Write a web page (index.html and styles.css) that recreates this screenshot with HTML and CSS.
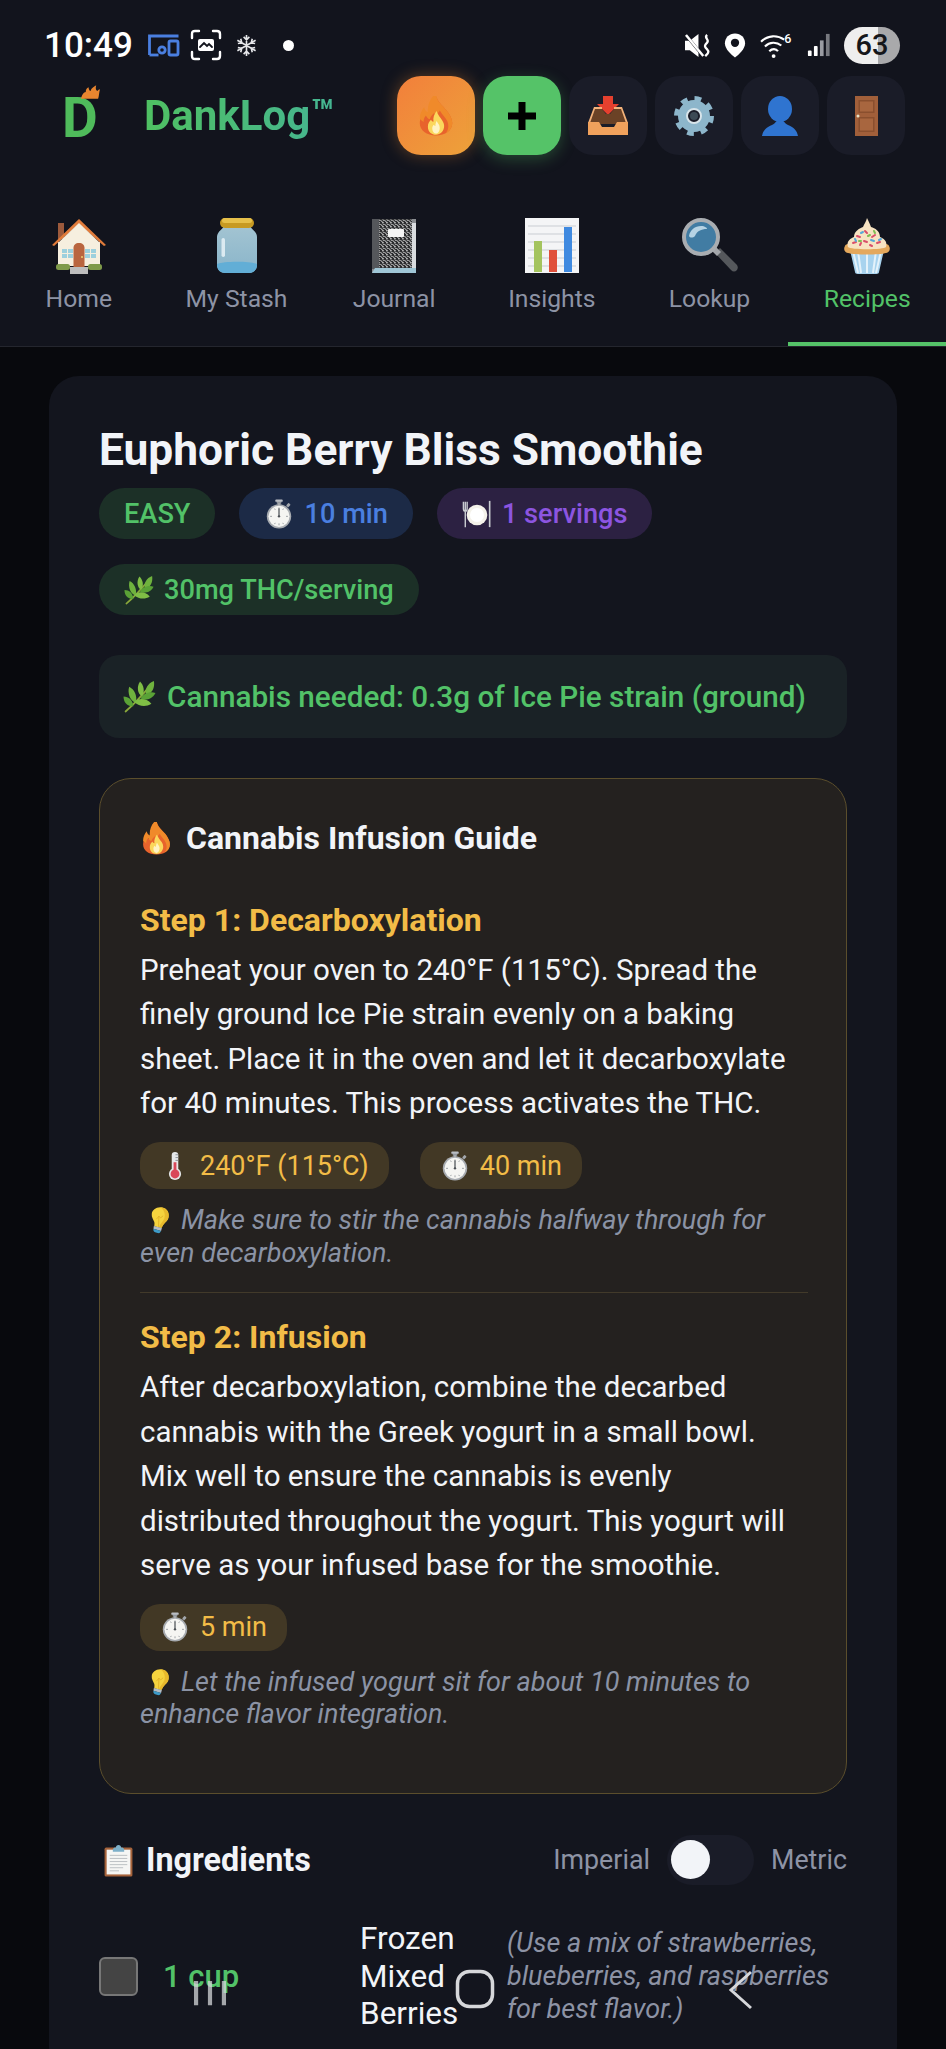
FILE: index.html
```html
<!DOCTYPE html>
<html lang="en">
<head>
<meta charset="utf-8">
<title>DankLog</title>
<link rel="stylesheet" href="styles.css">
</head>
<body>
<svg class="defs" width="0" height="0" aria-hidden="true">
  <defs>
    <symbol id="i-fire" viewBox="0 0 64 64">
      <path d="M33 2c3 10 12 15 19 25 3 5 6 10 6 16 0 12-11 20-26 20S6 55 6 43c0-7 3-13 7-18 1 4 3 7 6 8-1-12 4-24 14-31z" fill="#e8632c"/>
      <path d="M33 2c3 10 12 15 19 25 3 5 6 10 6 16 0 7-4 13-10 16 4-5 5-12 2-19-3-6-8-10-12-17-2 4-6 6-10 5-3 3-5 6-6 9-3-1-5-3-6-6-3 3-4 7-4 11-2-3-6-4-6-6 0-7 3-13 7-18 1 4 3 7 6 8-1-12 4-24 14-31z" fill="#f08a2a"/>
      <path d="M33 24c2 7 6 10 9 15 2 3 3 6 3 9 0 8-6 14-13 14s-13-5-13-13c0-5 2-8 5-11 1 2 2 3 4 3-1-6 1-12 5-17z" fill="#fbd75c"/>
      <path d="M33 40c2 4 5 6 5 11 0 5-3 9-6 9s-6-3-6-8c0-3 1-5 3-6 0 1 1 2 2 2 0-3 1-6 2-8z" fill="#fff3c4"/>
    </symbol>
    <symbol id="i-watch" viewBox="0 0 64 64">
      <rect x="27" y="2" width="10" height="8" rx="2" fill="#8d9299"/>
      <rect x="24" y="1" width="16" height="5" rx="2" fill="#b9bdc3"/>
      <rect x="29" y="8" width="6" height="6" fill="#a2a6ac"/>
      <rect x="49" y="9" width="6" height="8" rx="1.5" transform="rotate(42 52 13)" fill="#a2a6ac"/>
      <circle cx="32" cy="37" r="26" fill="#a7abb0"/>
      <circle cx="32" cy="37" r="22.5" fill="#f5f5f2"/>
      <path d="M32 18v4M32 52v4M13 37h4M47 37h4M22.5 20.5l1.5 2.6M41.5 20.5l-1.5 2.6M22.5 53.5l1.5-2.6M41.5 53.5l-1.5-2.6" stroke="#80858c" stroke-width="1.6"/>
      <path d="M32 37V21" stroke="#4b4f55" stroke-width="2.6" stroke-linecap="round"/>
      <circle cx="32" cy="37" r="2.5" fill="#4b4f55"/>
    </symbol>
    <symbol id="i-herb" viewBox="0 0 64 64">
      <path d="M5 61C18 50 32 36 52 12" stroke="#8aa83a" stroke-width="3.500" fill="none" stroke-linecap="round"/>
      <path d="M60 2c2 13-3 24-15 27-4-10 3-23 15-27z" fill="#6fb23e"/>
      <path d="M33 3c7 7 10 18 4 29-9-5-11-19-4-29z" fill="#7fbe45"/>
      <path d="M63 25c-6 12-19 15-29 11 4-10 18-15 29-11z" fill="#5aa236"/>
      <path d="M12 13c10 5 16 17 13 31-11-3-17-18-13-31z" fill="#6fb23e"/>
      <path d="M55 46c-11 7-24 5-33-3 6-8 23-9 33 3z" fill="#7fbe45"/>
      <path d="M1 32c10 0 18 7 19 19-11 1-19-7-19-19z" fill="#5aa236"/>
    </symbol>
    <symbol id="i-bulb" viewBox="0 0 64 64">
      <path d="M36 2c13 0 22 10 20 22-1 9-8 12-13 20-2 3-3 5-4 7l-17-4c0-3 1-6 0-10-2-6-7-11-6-19C17 9 25 2 36 2z" fill="#f5d33e"/>
      <path d="M36 2c13 0 22 10 20 22-1 9-8 12-13 20-2 3-3 5-4 7l-6-2c3-8 10-13 13-21 3-10-1-21-10-26z" fill="#e8b92c"/>
      <path d="M27 30l6-7 4 4 6-5M33 23l-1 25" stroke="#d9a520" stroke-width="1.6" fill="none"/>
      <path d="M21 46l19 5-2 7-18-5z" fill="#b4bcc4"/>
      <path d="M20 53l18 5-2 3c-1 2-3 3-6 2l-6-2c-3-1-5-3-4-8z" fill="#3d9bc9"/>
    </symbol>
  </defs>
</svg>

<div class="app">
  <div class="status">
    <span class="time">10:49</span>
    <svg class="st st-cast" viewBox="0 0 32 24" fill="none" stroke="#4a7fe0" stroke-width="2.8"><path d="M1.500 22V3h29"/><path d="M1.500 22h9"/><circle cx="14" cy="17" r="3.200"/><rect x="21" y="8" width="9" height="14" rx="1.500"/></svg>
    <svg class="st st-shot" viewBox="0 0 32 32" fill="none" stroke="#fff" stroke-width="2.4" stroke-linecap="round"><path d="M2 9V5c0-2 1-3 3-3h4M23 2h4c2 0 3 1 3 3v4M30 23v4c0 2-1 3-3 3h-4M9 30H5c-2 0-3-1-3-3v-4"/><rect x="8" y="10" width="16" height="12" rx="2" fill="#fff" stroke="none"/><path d="M10 18l4-4 3 3 2-2 3 3" stroke="#12141d" stroke-width="1.800"/></svg>
    <svg class="st st-snow" viewBox="0 0 24 24" fill="none" stroke="#e6e7ea" stroke-width="1.700"><path d="M12 1v22M2.500 6.500l19 11M21.500 6.500l-19 11M9 3l3 3 3-3M9 21l3-3 3 3M3 10l4-1-1-4M21 14l-4 1 1 4M21 10l-4-1 1-4M3 14l4 1-1 4"/></svg>
    <span class="st-dot"></span>
    <span class="st-right">
      <svg class="st st-mute" viewBox="0 0 28 26"><path d="M1 8h5l9-7v24l-9-7H1z" fill="#fff"/><path d="M1 1l18 22" stroke="#12141d" stroke-width="3"/><path d="M2 2l18 22" stroke="#fff" stroke-width="2.600"/><path d="M24 2c-4 3 3 5 0 8s-3 4 0 7 0 5-2 7" fill="none" stroke="#fff" stroke-width="2.400"/></svg>
      <svg class="st st-pin" viewBox="0 0 24 28"><path d="M12 1C5.500 1 1 5.800 1 11.500 1 18 8 24 12 27c4-3 11-9 11-15.500C23 5.800 18.500 1 12 1z" fill="#fff"/><circle cx="12" cy="11" r="4.500" fill="#12141d"/></svg>
      <svg class="st st-wifi" viewBox="0 0 34 28" fill="none" stroke="#fff" stroke-width="2.200"><path d="M1 10c7-7 17-7 24-2M5 15c5-5 12-5 17-1M9.500 20c3-3 7-3 9 0"/><circle cx="14" cy="25" r="2" fill="#fff" stroke="none"/><text class="wifi-six" x="25" y="11">6</text></svg>
      <svg class="st st-signal" viewBox="0 0 26 26"><rect x="1" y="19" width="4" height="6" rx="1" fill="#fff"/><rect x="7.500" y="14" width="4" height="11" rx="1" fill="#fff"/><rect x="14" y="8" width="4" height="17" fill="#9a9ca2"/><rect x="20.500" y="1" width="4" height="24" fill="#77797f"/></svg>
      <span class="battery">63</span>
    </span>
  </div>

  <header class="topbar">
    <span class="logo">D<svg class="logo-flame" viewBox="0 0 20 14"><path d="M0 14C1 10 3 7 5 7c0-3 1-4 3-5 0 2 1 4 2 4 1-3 3-4 6-6-1 4 0 5 1 6 1-1 2-2 3-2-1 3-1 8-2 10z" fill="#e8852f"/></svg></span>
    <span class="brand">DankLog<sup class="tm">™</sup></span>
    <div class="actions">
      <button class="act act-fire"><svg class="ico-act"><use href="#i-fire"/></svg></button>
      <button class="act act-add"><svg class="ico-plus" viewBox="0 0 28 28"><path d="M10.500 0h7v10.500H28v7H17.500V28h-7V17.500H0v-7h10.500z" fill="#000"/></svg></button>
      <button class="act"><svg class="ico-act" viewBox="0 0 40 40"><path d="M15 0h10v8h6L20 19 9 8h6z" fill="#e5402e"/><path d="M6 12h7l5 6h4l5-6h7l5 16H1z" fill="#6b4226"/><path d="M6 11h8v2H7L2 27H0zM34 11h-8v2h7l5 14h2z" fill="#f3b27a"/><path d="M0 26h11l3 5h12l3-5h11v13H0z" fill="#f0a15c"/></svg></button>
      <button class="act"><svg class="ico-act" viewBox="0 0 40 40"><circle cx="20" cy="20" r="11.500" fill="none" stroke="#8db6cb" stroke-width="9"/><circle cx="20" cy="20" r="17" fill="none" stroke="#8db6cb" stroke-width="6" stroke-dasharray="6.500 6.850"/><circle cx="20" cy="20" r="4" fill="#3c4a55"/><circle cx="20" cy="20" r="7" fill="none" stroke="#d8e4ea" stroke-width="2"/></svg></button>
      <button class="act"><svg class="ico-act" viewBox="0 0 40 40"><ellipse cx="20" cy="13" rx="12" ry="13" fill="#2f74d0"/><path d="M20 24c-4 0-4 3-8 5-5 2-9 5-10 11h36c-1-6-5-9-10-11-4-2-4-5-8-5z" fill="#2f74d0"/></svg></button>
      <button class="act"><svg class="ico-act" viewBox="0 0 40 40"><rect x="9" y="0" width="23" height="40" fill="#a15f3a"/><rect x="12.500" y="4" width="16" height="13" fill="#8a4f2e"/><rect x="12.500" y="21" width="16" height="15" fill="#8a4f2e"/><rect x="14" y="5.500" width="13" height="10" fill="#a8663f"/><rect x="14" y="22.500" width="13" height="12" fill="#a8663f"/><circle cx="12" cy="20" r="1.500" fill="#e8e2c8"/></svg></button>
    </div>
  </header>

  <nav class="tabs">
    <a class="tab"><svg class="tab-ico" viewBox="0 0 56 56">
      <rect x="7" y="5" width="6" height="16" fill="#9c5a3c"/>
      <path d="M7 24h42v24H7z" fill="#f6efdf"/>
      <path d="M28 1L1 27l2 1L28 6l25 22 2-1z" fill="#e07b3a"/><path d="M28 5L8 24h40z" fill="#f6efdf"/>
      <rect x="11" y="31" width="11" height="9" fill="#9dd0dd"/><rect x="34" y="31" width="11" height="9" fill="#9dd0dd"/>
      <path d="M16.500 31v9M11 35.500h11M39.500 31v9M34 35.500h11" stroke="#f6efdf" stroke-width="1"/>
      <path d="M22.500 50V30c0-3 2-5 5.500-5s5.500 2 5.500 5v20z" fill="#b9653f"/><circle cx="31" cy="39" r="1" fill="#f0d070"/>
      <rect x="5" y="46" width="14" height="6" rx="2.500" fill="#7f9a4a"/><rect x="37" y="46" width="14" height="6" rx="2.500" fill="#7f9a4a"/>
      <rect x="19" y="49" width="18" height="7" fill="#bdbdbd"/></svg><span>Home</span></a>
    <a class="tab"><svg class="tab-ico" viewBox="0 0 56 56">
      <defs><linearGradient id="jarg" x1="0" y1="0" x2="0" y2="1"><stop offset="0" stop-color="#a3c4d2"/><stop offset="1" stop-color="#8ab5ca"/></linearGradient></defs>
      <path d="M15 7h26c0 4 7 6 7 12v28c0 5-4 8-8 8H16c-4 0-8-3-8-8V19c0-6 7-8 7-12z" fill="url(#jarg)"/>
      <path d="M8 46c6-3 34-3 40 0v1c0 5-4 8-8 8H16c-4 0-8-3-8-8z" fill="#62aed6"/>
      <rect x="12.500" y="20" width="3.500" height="19" rx="1.700" fill="#dbeaf1"/>
      <rect x="11" y="0" width="34" height="10" rx="5" fill="#c79a22"/><rect x="13" y="0" width="30" height="5" rx="2.500" fill="#e6c04a"/></svg><span>My Stash</span></a>
    <a class="tab"><svg class="tab-ico" viewBox="0 0 56 56">
      <defs><pattern id="speck" width="4" height="4" patternUnits="userSpaceOnUse"><rect width="4" height="4" fill="#2b2c2e"/><path d="M0 .8h1.800M2.400 2.400l1.500 1M.6 3.300l1-.9" stroke="#ededed" stroke-width="1"/></pattern></defs>
      <rect x="6" y="1" width="44" height="54" fill="#8a8d91"/>
      <rect x="6" y="1" width="7" height="50" fill="#55575b"/>
      <rect x="13" y="1" width="33" height="49" fill="url(#speck)"/>
      <rect x="46" y="5" width="4" height="45" fill="#d9dcdf"/>
      <rect x="22" y="11" width="16" height="8" rx="1" fill="#f4f4f4"/>
      <path d="M6 55l3-5h41v5z" fill="#9fc6d6"/></svg><span>Journal</span></a>
    <a class="tab"><svg class="tab-ico" viewBox="0 0 56 56">
      <rect x="1" y="0" width="54" height="55" fill="#f4f5f6"/>
      <path d="M4 8h48M4 16h48M4 24h48M4 32h48M4 40h48M4 48h48" stroke="#c9cdd2" stroke-width="1"/>
      <rect x="10" y="23" width="8" height="31" fill="#a4c45e"/><rect x="25" y="32" width="8" height="22" fill="#e0503b"/><rect x="40" y="9" width="8" height="45" fill="#3f8ae0"/></svg><span>Insights</span></a>
    <a class="tab"><svg class="tab-ico" viewBox="0 0 56 56">
      <path d="M33 35l5-5 17 17c1 2 1 3 0 5-2 2-4 2-6 0z" fill="#55585c"/>
      <path d="M30 33l4-4 5 5-4 4z" fill="#a4a7ab"/>
      <circle cx="19" cy="19" r="17" fill="#417ca3" stroke="#a9adb1" stroke-width="4"/>
      <path d="M7 18c1-6 6-10 12-10 4 0 6 2 6 3-6 0-10 2-12 7-2 2-5 2-6 0z" fill="#b6d3e4"/></svg><span>Lookup</span></a>
    <a class="tab tab-on"><svg class="tab-ico" viewBox="0 0 56 56">
      <path d="M11 32h34l-5 22c0 1-1 2-3 2H19c-2 0-3-1-3-2z" fill="#a8d3ee"/>
      <path d="M19 33l3 22M28 33v22M37 33l-3 22M14 33l5 22M42 33l-5 22" stroke="#e4f2fa" stroke-width="2"/>
      <path d="M6 28c0-5 44-5 44 0 2 3 0 7-3 7-6 2-32 2-38 0-3 0-5-4-3-7z" fill="#e4a85c"/>
      <path d="M9 29c-2-6 3-9 6-10 0-6 6-9 9-10 1-3 3-5 4-9 2 4 3 6 4 9 4 1 9 4 9 10 3 1 8 4 6 10-2 3-36 3-38 0z" fill="#f7e3c2"/>
      <path d="M18 18l3 1M26 13l2 2M36 17l-3 2M14 25l3-1M25 23l3 1M38 25l3-1M31 27l2 1M21 27l1-2" stroke="#d94f6a" stroke-width="2" stroke-linecap="round"/>
      <path d="M22 15l2-1M32 22l3 1M16 21l1 2M42 21l-2 1" stroke="#57a8d8" stroke-width="2" stroke-linecap="round"/>
      <path d="M29 18l2-1M20 23l2 0M35 13l1 2" stroke="#7fbf52" stroke-width="2" stroke-linecap="round"/></svg><span>Recipes</span></a>
  </nav>

  <main class="main">
    <article class="card">
      <h1 class="title">Euphoric Berry Bliss Smoothie</h1>
      <div class="pills">
        <span class="pill pill-green">EASY</span>
        <span class="pill pill-blue"><svg class="emo"><use href="#i-watch"/></svg>10 min</span>
        <span class="pill pill-purple"><svg class="emo" viewBox="0 0 64 64"><path d="M7 6v20M3 6v14c0 4 2 6 4 6s4-2 4-6V6M7 26v34" stroke="#c9ccd1" stroke-width="3" fill="none"/><circle cx="32" cy="34" r="22" fill="#f4f2ea"/><circle cx="32" cy="34" r="15" fill="#fff"/><path d="M59 4v56" stroke="#c9ccd1" stroke-width="3.500"/></svg>1 servings</span>
        <span class="pill pill-green"><svg class="emo"><use href="#i-herb"/></svg>30mg THC/serving</span>
      </div>
      <div class="needed"><svg class="emo emo-lg"><use href="#i-herb"/></svg>Cannabis needed: 0.3g of Ice Pie strain (ground)</div>

      <section class="guide">
        <h2 class="guide-title"><svg class="emo emo-lg"><use href="#i-fire"/></svg>Cannabis Infusion Guide</h2>
        <div class="step">
          <h3 class="step-title">Step 1: Decarboxylation</h3>
          <p class="step-text">Preheat your oven to 240°F (115°C). Spread the finely ground Ice Pie strain evenly on a baking sheet. Place it in the oven and let it decarboxylate for 40 minutes. This process activates the THC.</p>
          <div class="chips">
            <span class="chip"><svg class="emo" viewBox="0 0 64 64"><rect x="25" y="2" width="14" height="46" rx="7" fill="#e6e8ea"/><circle cx="32" cy="49" r="13" fill="#e6e8ea"/><circle cx="32" cy="49" r="9.500" fill="#d9485a"/><rect x="29" y="24" width="6" height="24" fill="#d9485a"/><path d="M33 8h6M33 14h6M33 20h6" stroke="#8a8f95" stroke-width="2"/></svg>240°F (115°C)</span>
            <span class="chip"><svg class="emo"><use href="#i-watch"/></svg>40 min</span>
          </div>
          <p class="tip"><svg class="emo-tip"><use href="#i-bulb"/></svg>Make sure to stir the cannabis halfway through for even decarboxylation.</p>
        </div>
        <div class="step step-last">
          <h3 class="step-title">Step 2: Infusion</h3>
          <p class="step-text">After decarboxylation, combine the decarbed cannabis with the Greek yogurt in a small bowl. Mix well to ensure the cannabis is evenly distributed throughout the yogurt. This yogurt will serve as your infused base for the smoothie.</p>
          <div class="chips">
            <span class="chip"><svg class="emo"><use href="#i-watch"/></svg>5 min</span>
          </div>
          <p class="tip"><svg class="emo-tip"><use href="#i-bulb"/></svg>Let the infused yogurt sit for about 10 minutes to enhance flavor integration.</p>
        </div>
      </section>

      <div class="ing-head">
        <h2 class="ing-title"><svg class="emo emo-lg" viewBox="0 0 64 64"><rect x="5" y="7" width="54" height="56" rx="3" fill="#a5623a"/><rect x="9" y="11" width="46" height="48" fill="#f5f6f4"/><path d="M15 22h34M15 28h34M15 34h34M15 40h34M15 46h26M15 52h18" stroke="#b9bdc0" stroke-width="1.800"/><path d="M21 12c0-4 3-5 6-5 0-3 2-5 5-5s5 2 5 5c3 0 6 1 6 5v3H21z" fill="#7db0c9"/></svg>Ingredients</h2>
        <div class="units">
          <span>Imperial</span>
          <span class="toggle"><span class="knob"></span></span>
          <span>Metric</span>
        </div>
      </div>
      <div class="ing-row">
        <span class="check"></span>
        <span class="qty">1 cup</span>
        <span class="ing-name">Frozen Mixed Berries</span>
        <span class="ing-note">(Use a mix of strawberries, blueberries, and raspberries for best flavor.)</span>
      </div>
    </article>
  </main>

  <div class="softkeys" aria-hidden="true">
    <svg class="sk sk-recent" viewBox="0 0 36 28"><path d="M3 0v26M18 0v26M33 0v26" stroke="#d6d7da" stroke-opacity=".75" stroke-width="4.500"/></svg>
    <svg class="sk sk-home" viewBox="0 0 40 40"><rect x="2.500" y="2.500" width="35" height="35" rx="12" fill="none" stroke="#d6d7da" stroke-width="3.500"/></svg>
    <svg class="sk sk-back" viewBox="0 0 26 40"><path d="M23 2L3 20l20 18" fill="none" stroke="#d6d7da" stroke-width="3"/></svg>
  </div>
</div>
</body>
</html>
```

FILE: styles.css
```css
* { box-sizing: border-box; }
html, body { margin: 0; padding: 0; }
body {
  width: 946px;
  height: 2049px;
  overflow: hidden;
  background: #08090d;
  font-family: Roboto, "Liberation Sans", sans-serif;
  color: #f2f4f8;
}
.defs { position: absolute; }
.app { position: relative; width: 946px; height: 2049px; overflow: hidden; }
svg { display: block; flex: none; }

/* status bar */
.status {
  height: 76px;
  padding: 14px 46px 0 44px;
  display: flex;
  align-items: center;
  background: #12141d;
}
.time { font-size: 35px; font-weight: 500; color: #fff; margin-right: 15px; }
.st-cast { width: 32px; height: 24px; margin-right: 10px; }
.st-shot { width: 32px; height: 32px; margin-right: 13px; }
.st-snow { width: 23px; height: 25px; margin-right: 25px; }
.st-dot { width: 11px; height: 11px; border-radius: 50%; background: #fff; }
.st-right { margin-left: auto; display: flex; align-items: center; }
.st-mute { width: 27px; height: 25px; margin-right: 13px; }
.st-pin { width: 22px; height: 27px; margin-right: 14px; }
.st-wifi { width: 33px; height: 27px; margin-right: 14px; }
.wifi-six { font: 500 13px Roboto, sans-serif; fill: #fff; stroke: none; }
.st-signal { width: 24px; height: 26px; margin-right: 13px; }
.battery {
  width: 56px;
  height: 37px;
  border-radius: 19px;
  background: linear-gradient(90deg, #eeeeee 0 61%, #a9a9ab 61%);
  color: #15161a;
  font-size: 29px;
  font-weight: 500;
  display: flex;
  align-items: center;
  justify-content: center;
}

/* header */
.topbar {
  height: 79px;
  padding: 0 41px 0 62px;
  display: flex;
  align-items: center;
  background: #12141d;
}
.logo {
  position: relative;
  width: 82px;
  font-size: 55px;
  font-weight: 700;
  color: #4fbb5b;
  line-height: 50px;
  margin-top: 4px;
}
.logo-flame { position: absolute; left: 19px; top: -8px; width: 19px; height: 14px; }
.brand {
  font-size: 42px;
  font-weight: 700;
  background: linear-gradient(90deg, #4fc062, #45b592);
  -webkit-background-clip: text;
  background-clip: text;
  color: transparent;
  line-height: 50px;
}
.tm { font-size: 38px; vertical-align: 4px; line-height: 0; font-weight: 700; }
.actions { margin-left: auto; display: flex; gap: 8px; }
.act {
  width: 78px;
  height: 79px;
  border: 0;
  padding: 0;
  border-radius: 24px;
  background: #1a1c28;
  display: flex;
  align-items: center;
  justify-content: center;
}
.act-fire { background: linear-gradient(135deg, #f27f3b, #eda23a); box-shadow: 0 0 16px rgba(240, 140, 50, .35); }
.act-add { background: #55c368; box-shadow: 0 4px 16px rgba(85, 195, 104, .3); }
.ico-act { width: 40px; height: 40px; }
.ico-plus { width: 28px; height: 28px; }

/* tabs */
.tabs {
  height: 192px;
  display: flex;
  background: #12141d;
  border-bottom: 1px solid #24262e;
}
.tab {
  flex: 1 1 0;
  display: flex;
  flex-direction: column;
  align-items: center;
  padding-top: 63px;
  font-size: 24.700px;
  color: #8d93a5;
  border-bottom: 4px solid transparent;
}
.tab-ico { width: 56px; height: 56px; margin-bottom: 10px; }
.tab-on { color: #52c268; border-bottom-color: #55c368; }

/* card */
.main { padding: 29px 49px 0; }
.card {
  background: #13151e;
  border-radius: 30px;
  padding: 50px 50px 0;
  height: 1700px;
}
.title { margin: 0 0 14px; font-size: 44.300px; font-weight: 700; line-height: 48px; color: #f2f4f8; }
.pills { display: flex; flex-wrap: wrap; gap: 25px 24px; }
.pill {
  height: 51px;
  padding: 0 25px;
  border-radius: 26px;
  font-size: 27.200px;
  font-weight: 500;
  display: inline-flex;
  align-items: center;
}
.pill-green { background: #1c3027; color: #52c268; }
.pill-blue { background: #1c2a46; color: #4a7fe0; }
.pill-purple { background: #2c2142; color: #8c55e0; }
.emo { width: 30px; height: 30px; margin-right: 10px; }
.emo-lg { width: 33px; height: 33px; margin-right: 11px; }
.needed {
  margin-top: 40px;
  height: 83px;
  padding: 0 24px;
  border-radius: 20px;
  background: #1a2226;
  color: #52c268;
  font-size: 29.700px;
  font-weight: 500;
  display: flex;
  align-items: center;
  white-space: nowrap;
}

/* guide */
.guide {
  margin-top: 40px;
  height: 1016px;
  border: 1px solid #5b4e2c;
  border-radius: 32px;
  background: #24211f;
  padding: 41px 38px 0 40px;
}
.guide-title { margin: 0 0 46px; display: flex; align-items: center; font-size: 32px; font-weight: 700; line-height: 36px; }
.guide-title .emo-lg { margin-right: 13px; }
.step { padding-bottom: 23px; border-bottom: 1px solid #423a2a; margin-bottom: 26px; }
.step-last { border-bottom: 0; margin-bottom: 0; }
.step-title { margin: 0 0 10px; font-size: 32px; font-weight: 700; line-height: 36px; color: #f2bc47; }
.step-text { margin: 0 0 16.500px; font-size: 29.500px; line-height: 44.400px; color: #f2f4f8; }
.chips { display: flex; gap: 31px; margin-bottom: 15px; }
.chip {
  height: 47px;
  padding: 0 20px;
  border-radius: 20px;
  background: #423825;
  color: #f2bc47;
  font-size: 27px;
  display: inline-flex;
  align-items: center;
}
.tip { margin: 0; font-size: 27px; line-height: 32.600px; font-style: italic; color: #8b93a5; }
.emo-tip { display: inline-block; width: 27px; height: 30px; margin: 0 9px 0 5px; vertical-align: -6px; }

/* ingredients */
.ing-head { margin-top: 40px; height: 52px; display: flex; align-items: center; justify-content: space-between; }
.ing-title { margin: 0; display: flex; align-items: center; font-size: 32.300px; font-weight: 700; padding-left: 3px; }
.units { display: flex; align-items: center; gap: 17px; font-size: 26.800px; color: #8d93a5; }
.toggle { width: 87px; height: 50px; border-radius: 25px; background: #1a1c28; padding: 5px 4px; }
.knob { display: block; width: 39px; height: 39px; border-radius: 50%; background: #f2f4f8; }
.ing-row { margin-top: 34px; display: flex; align-items: center; }
.check { width: 39px; height: 39px; border-radius: 6px; border: 2px solid #777; background: #444; flex: none; margin-right: 25px; }
.qty { width: 197px; font-size: 31px; font-weight: 500; color: #52c268; flex: none; }
.ing-name { width: 147px; font-size: 31.500px; line-height: 37.500px; flex: none; }
.ing-note { width: 340px; font-size: 27px; line-height: 33px; font-style: italic; color: #8d93a5; flex: none; }

/* soft keys overlay */
.softkeys { position: absolute; inset: 0; pointer-events: none; }
.sk { position: absolute; }
.sk-recent { left: 192px; top: 1981px; width: 36px; height: 26px; }
.sk-home { left: 455px; top: 1969px; width: 40px; height: 40px; }
.sk-back { left: 728px; top: 1970px; width: 26px; height: 40px; }
```
